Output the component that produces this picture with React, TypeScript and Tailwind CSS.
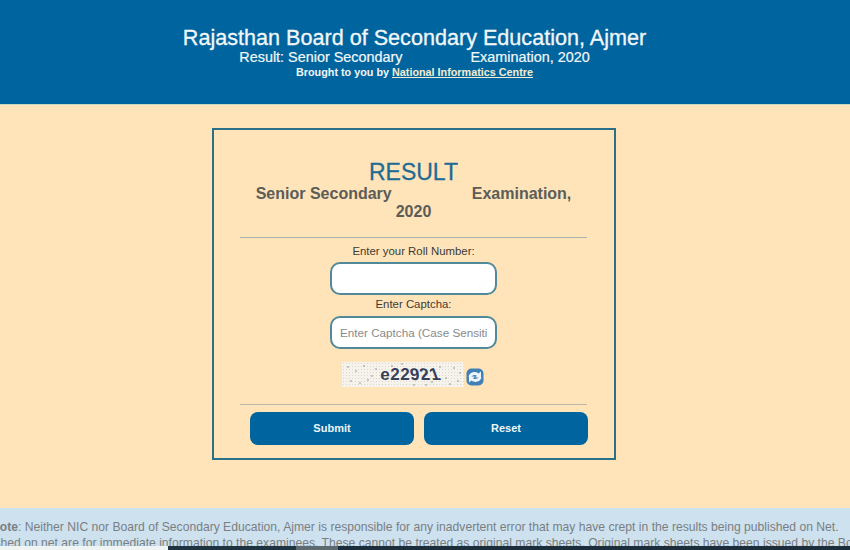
const FONT = "font-['Liberation_Sans',Arial,sans-serif]";

function RefreshIcon() {
  return (
    <svg width="20" height="20" viewBox="0 0 20 20" className="ml-[1px] mt-[5px] shrink-0">
      <rect x="1.500" y="1.500" width="17" height="17" rx="5" fill="#3f80b8" />
      <path d="M3.500 9.500C4.500 5.500 9.500 3.500 13.500 6.500L16 4.500V10.500H10L12 8.800C9.500 7.200 7 8 6 10.500z" fill="#eef5fa" />
      <path d="M16.500 10.500C15.500 14.500 10.500 16.500 6.500 13.500L4 15.500V9.500H10L8 11.200C10.500 12.800 13 12 14 9.500z" fill="#eef5fa" />
    </svg>
  );
}

// speckle on the captcha image
const DOTS = [
  [6, 5], [14, 9], [22, 4], [30, 14], [9, 19], [18, 21], [34, 7], [90, 20], [98, 5],
  [104, 16], [112, 6], [116, 19], [108, 22], [84, 23], [60, 2], [72, 23], [26, 18], [118, 11], [50, 4],
];

function Captcha() {
  return (
    <div className="flex justify-center h-[27px] mt-[13px]">
      <div className="relative w-[122px] h-[25px] bg-[#f6f3ec] bg-[radial-gradient(#dcd8ce_0.7px,transparent_0.8px)] bg-[length:3px_3px] flex items-center justify-center overflow-hidden">
        <svg width="122" height="25" className="absolute inset-0">
          {DOTS.map(([x, y]) => (
            <circle key={`${x}-${y}`} cx={x} cy={y} r="0.8" fill="#8a8b8d" />
          ))}
        </svg>
        <span className="relative ml-[14px] text-[17px] leading-none font-bold text-[#36405a] flex gap-[0.5px]">
          <span>e</span>
          <span>2</span>
          <span>2</span>
          <span className="skew-x-[6deg]">9</span>
          <span className="skew-x-[14deg]">2</span>
          <span className="skew-x-[20deg]">1</span>
        </span>
      </div>
      <RefreshIcon />
    </div>
  );
}

export default function App() {
  return (
    <div className={`${FONT} flex flex-col w-[850px] h-[550px] overflow-hidden bg-[#ffe4b9]`}>
      {/* Header */}
      <header className="h-[105px] shrink-0 bg-[#00659f] border-b border-b-[#c9d8c0] pt-[26px] pr-[21px] text-center text-[#f2f7f9]">
        <h1 className="text-[21.600px] leading-[24px] [-webkit-text-stroke:0.3px_#f2f7f9]">Rajasthan Board of Secondary Education, Ajmer</h1>
        <p className="text-[14.400px] leading-[15px] [-webkit-text-stroke:0.2px_#f2f7f9] whitespace-pre">Result: Senior Secondary                 Examination, 2020</p>
        <p className="text-[10.800px] leading-[14px] font-bold">
          Brought to you by <span className="underline text-[#f3ecd0]">National Informatics Centre</span>
        </p>
      </header>

      {/* Form card */}
      <main className="flex-1 pt-[23px] pl-[212px]">
        <div className="w-[404px] h-[332px] border-2 border-[#2b7089] pl-[26px] pr-[27px] pt-[29px]">
          <h2 className="text-[23px] leading-[26px] text-center text-[#1f6b94] [-webkit-text-stroke:0.3px_#1f6b94]">RESULT</h2>
          <h3 className="text-[16px] leading-[18px] font-bold text-[#5c5c58] text-center whitespace-pre">
            {"Senior Secondary                  Examination,"}
            <br />
            2020
          </h3>
          <hr className="mt-[16px] border-t border-[#a9b2ac]" />

          <label className="block mt-[6px] text-[11.400px] leading-[14px] text-center text-[#3d3b35]">Enter your Roll Number:</label>
          <input
            type="text"
            className="block mx-auto mt-[4px] w-[167px] h-[33px] rounded-[10px] border-2 border-[#51899b] bg-white"
          />
          <label className="block mt-[2px] text-[11.400px] leading-[14px] text-center text-[#3d3b35]">Enter Captcha:</label>
          <input
            type="text"
            placeholder="Enter Captcha (Case Sensitive)"
            className="block mx-auto mt-[5px] w-[167px] h-[33px] rounded-[10px] border-2 border-[#51899b] bg-white px-[8px] text-[11.700px] placeholder:text-[#8a8a8a]"
          />
          <Captcha />
          <hr className="mt-[15px] border-t border-[#b9b8a8]" />

          <div className="mt-[7px] flex gap-[10px] pl-[10px]">
            <button className="w-[164px] h-[33px] shrink-0 rounded-[8px] bg-[#00659f] text-[#eef5f8] text-[11px] font-bold">Submit</button>
            <button className="w-[164px] h-[33px] shrink-0 rounded-[8px] bg-[#00659f] text-[#eef5f8] text-[11px] font-bold">Reset</button>
          </div>
        </div>
      </main>

      {/* Note */}
      <section className="h-[38px] shrink-0 overflow-hidden bg-[#cde1ef] pt-[11px] text-[12.150px] leading-[16px] text-[#7a7f83] whitespace-nowrap">
        <p className="ml-[-9px]"><b>Note</b>: Neither NIC nor Board of Secondary Education, Ajmer is responsible for any inadvertent error that may have crept in the results being published on Net.</p>
        <p className="ml-[-75px]">Results published on net are for immediate information to the examinees. These cannot be treated as original mark sheets. Original mark sheets have been issued by the Board</p>
      </section>
      <div className="h-[4px] shrink-0 flex">
        <div className="w-[168px] bg-[#eef3f4]" />
        <div className="w-[128px] bg-[#1f3440]" />
        <div className="w-[42px] bg-[#5d6a70]" />
        <div className="flex-1 bg-[#1c2e3c]" />
      </div>
    </div>
  );
}
